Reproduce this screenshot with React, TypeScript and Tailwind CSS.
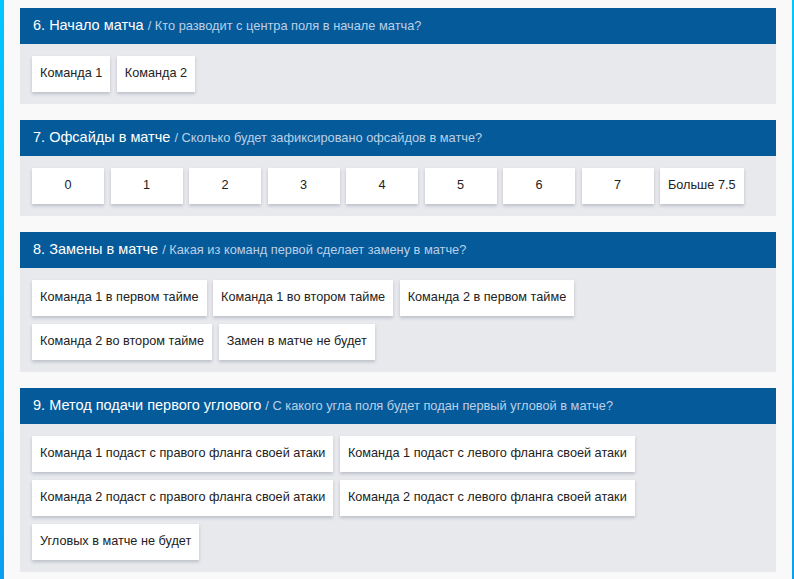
const sections = [
  {
    num: 6,
    title: "Начало матча",
    question: "Кто разводит с центра поля в начале матча?",
    options: ["Команда 1", "Команда 2"],
  },
  {
    num: 7,
    title: "Офсайды в матче",
    question: "Сколько будет зафиксировано офсайдов в матче?",
    options: ["0", "1", "2", "3", "4", "5", "6", "7", "Больше 7.5"],
    numeric: true,
  },
  {
    num: 8,
    title: "Замены в матче",
    question: "Какая из команд первой сделает замену в матче?",
    options: [
      "Команда 1 в первом тайме",
      "Команда 1 во втором тайме",
      "Команда 2 в первом тайме",
      "Команда 2 во втором тайме",
      "Замен в матче не будет",
    ],
  },
  {
    num: 9,
    title: "Метод подачи первого углового",
    question: "С какого угла поля будет подан первый угловой в матче?",
    options: [
      "Команда 1 подаст с правого фланга своей атаки",
      "Команда 1 подаст с левого фланга своей атаки",
      "Команда 2 подаст с правого фланга своей атаки",
      "Команда 2 подаст с левого фланга своей атаки",
      "Угловых в матче не будет",
    ],
  },
];

const App = () => {
  return (
    <div
      className="flex min-h-screen bg-[#f9f9f9] text-[#222]"
      style={{ fontFamily: '"Liberation Sans", Arial, sans-serif' }}
    >
      <div className="w-[4px] shrink-0 bg-gradient-to-b from-[#00c6ff] to-[#0a9ef2]" />
      <div className="flex flex-1 flex-col gap-4 px-4 pt-2 pb-4">
        {sections.map((s) => (
          <div key={s.num}>
            <div className="flex h-[36px] items-center bg-[#055a99] px-[13px] text-[14.5px] text-white">
              <span>
                {s.num}. {s.title}
              </span>
              <span className="ml-[4px] text-[12.8px] text-[#bcd0e8]">/ {s.question}</span>
            </div>
            <div className="flex flex-wrap gap-x-[6.5px] gap-y-2 bg-[#e8e9ed] py-3 pl-3 pr-6">
              {s.options.map((o) => (
                <button
                  key={o}
                  className={`flex h-[36px] items-center justify-center bg-white px-2 text-[12.7px] text-[#222] shadow-[0_2px_3px_rgba(60,70,100,0.25)] ${
                    s.numeric ? "min-w-[72px]" : ""
                  }`}
                >
                  {o}
                </button>
              ))}
            </div>
          </div>
        ))}
      </div>
      <div className="w-[2px] shrink-0 bg-gradient-to-b from-[#00c6ff] to-[#0a9ef2]" />
    </div>
  );
};

export default App;
